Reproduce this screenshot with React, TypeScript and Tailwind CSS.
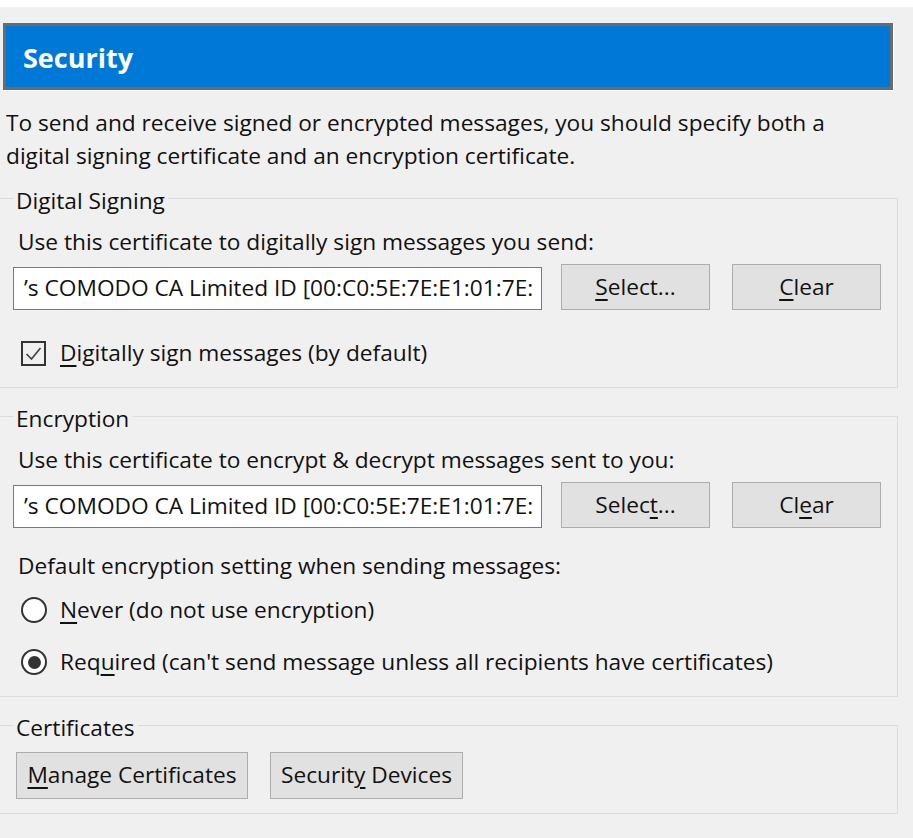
import React from "react";

const font = { fontFamily: '"Open Sans", "Noto Sans", sans-serif' };

function U({ children }: { children: React.ReactNode }) {
  return <span className="underline underline-offset-[4px] decoration-[1.5px]">{children}</span>;
}

function Btn({ children, className = "" }: { children: React.ReactNode; className?: string }) {
  return (
    <div
      className={
        "flex items-center justify-center bg-[#e1e1e1] border border-[#adadad] text-[22.7px] text-[#111] " +
        className
      }
    >
      {children}
    </div>
  );
}

function CertInput() {
  return (
    <div className="self-end h-[43px] w-[529px] bg-white border border-[#7a7a7a] flex items-center pl-[10px] overflow-hidden whitespace-nowrap text-[22.7px] text-[#111]">
      ’s COMODO CA Limited ID [00:C0:5E:7E:E1:01:7E:
    </div>
  );
}

function Group({
  title,
  children,
  className = "",
}: {
  title: string;
  children: React.ReactNode;
  className?: string;
}) {
  return (
    <fieldset
      className={
        "border border-l-0 border-[#dcdcdc] mr-[15px] pl-[13px] pr-[16px] " + className
      }
    >
      <legend className="px-[3px] pt-[6px] text-[22.7px] leading-[24px] text-[#111]">{title}</legend>
      {children}
    </fieldset>
  );
}

export default function App() {
  return (
    <div className="w-[913px] h-[838px] bg-[#f0f0f0] text-[#111]" style={font}>
      <div className="h-[7px] bg-white" />
      <div className="mt-[16px] ml-[3px] mr-[20px] h-[67px] border-[3px] border-[#6b6b6b] bg-[#0078d7] flex items-center pl-[17px] shadow-[1px_1px_0_#ffffff]">
        <span className="text-white font-bold text-[27px] leading-none pt-[2px]">Security</span>
      </div>
      <p className="mt-[16px] ml-[6px] text-[22.7px] leading-[33px] w-[860px]">
        To send and receive signed or encrypted messages, you should specify both a digital
        signing certificate and an encryption certificate.
      </p>

      <Group title="Digital Signing" className="mt-[11px] pb-[20px]">
        <div className="mt-[15px] ml-[5px] text-[22.7px] leading-[28px]">
          Use this certificate to digitally sign messages you send:
        </div>
        <div className="mt-[8px] flex items-start">
          <CertInput />
          <Btn className="ml-[19px] w-[149px] h-[46px]">
            <span>
              <U>S</U>elect...
            </span>
          </Btn>
          <Btn className="ml-[22px] w-[149px] h-[46px]">
            <span>
              <U>C</U>lear
            </span>
          </Btn>
        </div>
        <div className="mt-[29px] ml-[8px] flex items-center h-[28px]">
          <div className="w-[25px] h-[25px] border-2 border-[#333] bg-[#f0f0f0] flex items-center justify-center">
            <svg width="19" height="19" viewBox="0 0 19 19">
              <path d="M2.5 10 L7.5 15 L16.5 4" fill="none" stroke="#444" strokeWidth="1.7" />
            </svg>
          </div>
          <span className="ml-[14px] text-[22.7px] leading-[28px]">
            <U>D</U>igitally sign messages (by default)
          </span>
        </div>
      </Group>

      <Group title="Encryption" className="mt-[13px] pb-[20px]">
        <div className="mt-[15px] ml-[5px] text-[22.7px] leading-[28px]">
          Use this certificate to encrypt &amp; decrypt messages sent to you:
        </div>
        <div className="mt-[8px] flex items-start">
          <CertInput />
          <Btn className="ml-[19px] w-[149px] h-[46px]">
            <span>
              Selec<U>t</U>...
            </span>
          </Btn>
          <Btn className="ml-[22px] w-[149px] h-[46px]">
            <span>
              Cl<U>e</U>ar
            </span>
          </Btn>
        </div>
        <div className="mt-[24px] ml-[5px] text-[22.7px] leading-[28px]">
          Default encryption setting when sending messages:
        </div>
        <div className="mt-[16px] ml-[8px] flex items-center h-[28px]">
          <div className="w-[26px] h-[26px] rounded-full border-2 border-[#333] bg-white" />
          <span className="ml-[13px] text-[22.7px] leading-[28px]">
            <U>N</U>ever (do not use encryption)
          </span>
        </div>
        <div className="mt-[24px] ml-[8px] flex items-center h-[28px]">
          <div className="w-[26px] h-[26px] rounded-full border-2 border-[#333] bg-white flex items-center justify-center">
            <div className="w-[13px] h-[13px] rounded-full bg-[#333]" />
          </div>
          <span className="ml-[13px] text-[22.7px] leading-[28px]">
            Req<U>u</U>ired (can't send message unless all recipients have certificates)
          </span>
        </div>
      </Group>

      <Group title="Certificates" className="mt-[13px] pb-[14px]">
        <div className="mt-[12px] ml-[3px] flex items-center gap-[22px]">
          <Btn className="w-[232px] h-[47px]">
            <span>
              <U>M</U>anage Certificates
            </span>
          </Btn>
          <Btn className="w-[193px] h-[47px]">
            <span>
              Securit<U>y</U> Devices
            </span>
          </Btn>
        </div>
      </Group>
    </div>
  );
}
